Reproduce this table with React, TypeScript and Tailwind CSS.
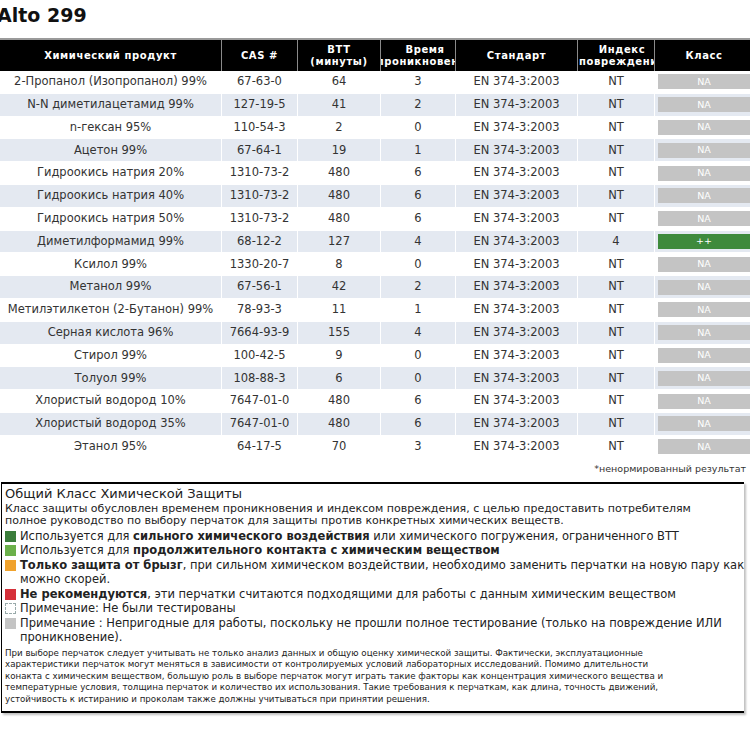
import React from "react";

type Row = {
  name: string;
  cas: string;
  btt: string;
  level: string;
  std: string;
  idx: string;
  cls: "NA" | "++";
};

const rows: Row[] = [
  { name: "2-Пропанол (Изопропанол) 99%", cas: "67-63-0", btt: "64", level: "3", std: "EN 374-3:2003", idx: "NT", cls: "NA" },
  { name: "N-N диметилацетамид 99%", cas: "127-19-5", btt: "41", level: "2", std: "EN 374-3:2003", idx: "NT", cls: "NA" },
  { name: "n-гексан 95%", cas: "110-54-3", btt: "2", level: "0", std: "EN 374-3:2003", idx: "NT", cls: "NA" },
  { name: "Ацетон 99%", cas: "67-64-1", btt: "19", level: "1", std: "EN 374-3:2003", idx: "NT", cls: "NA" },
  { name: "Гидроокись натрия 20%", cas: "1310-73-2", btt: "480", level: "6", std: "EN 374-3:2003", idx: "NT", cls: "NA" },
  { name: "Гидроокись натрия 40%", cas: "1310-73-2", btt: "480", level: "6", std: "EN 374-3:2003", idx: "NT", cls: "NA" },
  { name: "Гидроокись натрия 50%", cas: "1310-73-2", btt: "480", level: "6", std: "EN 374-3:2003", idx: "NT", cls: "NA" },
  { name: "Диметилформамид 99%", cas: "68-12-2", btt: "127", level: "4", std: "EN 374-3:2003", idx: "4", cls: "++" },
  { name: "Ксилол 99%", cas: "1330-20-7", btt: "8", level: "0", std: "EN 374-3:2003", idx: "NT", cls: "NA" },
  { name: "Метанол 99%", cas: "67-56-1", btt: "42", level: "2", std: "EN 374-3:2003", idx: "NT", cls: "NA" },
  { name: "Метилэтилкетон (2-Бутанон) 99%", cas: "78-93-3", btt: "11", level: "1", std: "EN 374-3:2003", idx: "NT", cls: "NA" },
  { name: "Серная кислота 96%", cas: "7664-93-9", btt: "155", level: "4", std: "EN 374-3:2003", idx: "NT", cls: "NA" },
  { name: "Стирол 99%", cas: "100-42-5", btt: "9", level: "0", std: "EN 374-3:2003", idx: "NT", cls: "NA" },
  { name: "Толуол 99%", cas: "108-88-3", btt: "6", level: "0", std: "EN 374-3:2003", idx: "NT", cls: "NA" },
  { name: "Хлористый водород 10%", cas: "7647-01-0", btt: "480", level: "6", std: "EN 374-3:2003", idx: "NT", cls: "NA" },
  { name: "Хлористый водород 35%", cas: "7647-01-0", btt: "480", level: "6", std: "EN 374-3:2003", idx: "NT", cls: "NA" },
  { name: "Этанол 95%", cas: "64-17-5", btt: "70", level: "3", std: "EN 374-3:2003", idx: "NT", cls: "NA" },
];

const disclaimer = [
  "При выборе перчаток следует учитывать не только анализ данных и общую оценку химической защиты. Фактически, эксплуатационные",
  "характеристики перчаток могут меняться в зависимости от контролируемых условий лабораторных исследований. Помимо длительности",
  "конакта с химическим веществом, большую роль в выборе перчаток могут играть такие факторы как концентрация химического вещества и",
  "температурные условия, толщина перчаток и количество их использования. Такие требования к перчаткам, как длина, точность движений,",
  "устойчивость к истиранию и проколам также должны учитываться при принятии решения.",
];

const cols = "grid grid-cols-[222px_76px_83px_75px_122px_77px_110px]";

function HeadCell({ children, last }: { children: React.ReactNode; last?: boolean }) {
  return (
    <div
      className={`flex items-center justify-center overflow-hidden whitespace-nowrap text-center leading-[12px] ${
        last ? "" : "border-r border-[#8a8a8a]"
      }`}
    >
      {children}
    </div>
  );
}

function Swatch({ color, dashed }: { color?: string; dashed?: boolean }) {
  return (
    <span
      className={`mt-[2px] inline-block h-[11px] w-[11px] shrink-0 ${
        dashed ? "border border-dashed border-[#9aa]" : ""
      } ${color ?? ""}`}
    />
  );
}

export default function App() {
  return (
    <div className="h-[750px] w-[750px] overflow-hidden bg-white font-['DejaVu_Sans',sans-serif] text-[#333]">
      {/* TITLE */}
      <h1 className="-ml-[3px] pt-[3px] text-[19px] font-bold leading-[24px] text-[#111]">
        Alto 299
      </h1>

      {/* TABLE */}
      <div className="mt-[11px] w-[765px]">
        <div
          className={`${cols} h-[33px] border-t-2 border-[#9a9a9a] bg-black text-[10px] font-bold tracking-[0.6px] text-white`}
        >
          <HeadCell>Химический продукт</HeadCell>
          <HeadCell>CAS #</HeadCell>
          <HeadCell>
            BTT
            <br />
            (минуты)
          </HeadCell>
          <HeadCell>
            <span className="-mr-[14px]">
              Время
              <br />
              проникновения
            </span>
          </HeadCell>
          <HeadCell>Стандарт</HeadCell>
          <HeadCell>
            <span className="-mr-[12px]">
              Индекс
              <br />
              повреждения
            </span>
          </HeadCell>
          <HeadCell last>
            <span className="pr-[12px]">Класс</span>
          </HeadCell>
        </div>

        {rows.map((r, i) => (
          <div
            key={i}
            className={`${cols} h-[22.8px] border-b border-white text-[11.5px] ${
              i % 2 === 1 ? "bg-[#e4e9f1]" : "bg-white"
            }`}
          >
            <div className="flex items-center justify-center whitespace-nowrap border-r border-white">{r.name}</div>
            <div className="flex items-center justify-center border-r border-white">{r.cas}</div>
            <div className="flex items-center justify-center border-r border-white">{r.btt}</div>
            <div className="flex items-center justify-center border-r border-white">{r.level}</div>
            <div className="flex items-center justify-center border-r border-white">{r.std}</div>
            <div className="flex items-center justify-center border-r border-white">{r.idx}</div>
            <div className="flex items-center pl-[3px]">
              <div
                className={`flex h-[15px] w-full items-center justify-center text-[9.5px] text-white ${
                  r.cls === "++" ? "bg-[#3e8a3c]" : "bg-[#c4c4c4]"
                }`}
              >
                <span className="pr-[15px]">{r.cls}</span>
              </div>
            </div>
          </div>
        ))}
      </div>

      {/* FOOTNOTE */}
      <div className="mt-[4px] flex justify-end whitespace-nowrap pr-[4px] text-[9.5px] leading-[12px] text-[#333]">
        <span>*ненормированный результат</span>
      </div>

      {/* LEGEND BOX */}
      <div className="ml-[1px] mt-[7px] w-[743px] border-y-2 border-l border-black pb-[5px] pl-[3px] pt-[1px] text-[#222] shadow-[2px_2px_2px_rgba(0,0,0,0.25)]">
        <div className="text-[13px] leading-[18px]">Общий Класс Химической Защиты</div>
        <p className="w-[716px] text-[11px] leading-[12px]">
          Класс защиты обусловлен временем проникновения и индексом повреждения, с целью предоставить потребителям
          полное руководство по выбору перчаток для защиты против конкретных химических веществ.
        </p>

        <div className="-mr-[8px] mt-[2px] flex flex-col text-[11.5px] leading-[14.5px]">
          <div className="flex gap-[4px]">
            <Swatch color="bg-[#3b7d3b]" />
            <span>
              Используется для <b>сильного химического воздействия</b> или химического погружения, ограниченного BTT
            </span>
          </div>
          <div className="flex gap-[4px]">
            <Swatch color="bg-[#6bb04a]" />
            <span>
              Используется для <b>продолжительного контакта с химическим веществом</b>
            </span>
          </div>
          <div className="flex gap-[4px]">
            <Swatch color="bg-[#f0a22c]" />
            <span>
              <b>Только защита от брызг</b>, при сильном химическом воздействии, необходимо заменить перчатки на новую пару как
              можно скорей.
            </span>
          </div>
          <div className="flex gap-[4px]">
            <Swatch color="bg-[#d5303a]" />
            <span>
              <b>Не рекомендуются</b>, эти перчатки считаются подходящими для работы с данным химическим веществом
            </span>
          </div>
          <div className="flex gap-[4px]">
            <Swatch dashed />
            <span>Примечание: Не были тестированы</span>
          </div>
          <div className="flex gap-[4px]">
            <Swatch color="bg-[#c4c4c4]" />
            <span className="pr-[20px]">
              Примечание : Непригодные для работы, поскольку не прошли полное тестирование (только на повреждение ИЛИ
              проникновение).
            </span>
          </div>
        </div>

        <div className="mt-[3px] text-[8.7px] leading-[11.6px] text-[#222]">
          {disclaimer.map((line, i) => (
            <div key={i} className="whitespace-nowrap">
              {line}
            </div>
          ))}
        </div>
      </div>
    </div>
  );
}
